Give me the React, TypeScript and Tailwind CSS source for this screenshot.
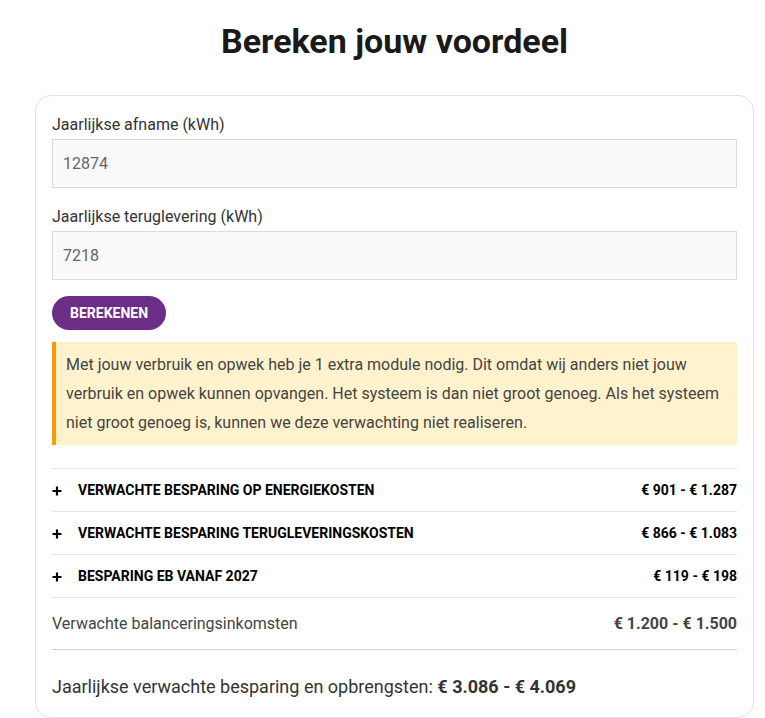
import { useState } from 'react';

const rows = [
  { label: 'VERWACHTE BESPARING OP ENERGIEKOSTEN', value: '€ 901 - € 1.287' },
  { label: 'VERWACHTE BESPARING TERUGLEVERINGSKOSTEN', value: '€ 866 - € 1.083' },
  { label: 'BESPARING EB VANAF 2027', value: '€ 119 - € 198' },
];

function Plus() {
  return (
    <svg width="10" height="10" viewBox="0 0 10 10" className="mt-[2px] shrink-0">
      <path d="M5 0.5v9M0.5 5h9" stroke="#000" strokeWidth="2.2" />
    </svg>
  );
}

export default function App() {
  const [afname, setAfname] = useState('12874');
  const [teruglevering, setTeruglevering] = useState('7218');

  return (
    <div className="h-screen overflow-hidden bg-white pt-[20px] pr-[11px] pl-[35px] font-['Roboto',sans-serif] text-[#333]">
      <h1 className="text-center text-[34px] font-bold leading-[42px] text-[#1a1a1a]">Bereken jouw voordeel</h1>

      <div className="mt-[33px] rounded-2xl border border-[#e2e2e2] px-4 pt-[15px] pb-[17px]">
        {/* Inputs */}
        <label className="block text-base leading-[28px] text-[#333]">Jaarlijkse afname (kWh)</label>
        <input
          value={afname}
          onChange={(e) => setAfname(e.target.value)}
          className="block h-[49px] w-full border border-[#dcdcdc] bg-[#f9f9f9] px-[10px] text-base text-[#666] outline-none"
        />

        <label className="mt-[15px] block text-base leading-[28px] text-[#333]">Jaarlijkse teruglevering (kWh)</label>
        <input
          value={teruglevering}
          onChange={(e) => setTeruglevering(e.target.value)}
          className="block h-[49px] w-full border border-[#dcdcdc] bg-[#f9f9f9] px-[10px] text-base text-[#666] outline-none"
        />

        <button className="mt-[16px] h-[34px] rounded-full bg-[#6b2d85] px-[18px] text-[14px] font-bold text-white">
          BEREKENEN
        </button>

        {/* Melding */}
        <div className="mt-[12px] border-l-4 border-[#ff9900] bg-[#fff2cc] py-[8px] pr-[12px] pl-[10px] text-base leading-[29px] text-[#444]">
          Met jouw verbruik en opwek heb je 1 extra module nodig. Dit omdat wij anders niet jouw verbruik en opwek kunnen
          opvangen. Het systeem is dan niet groot genoeg. Als het systeem niet groot genoeg is, kunnen we deze verwachting
          niet realiseren.
        </div>

        {/* Resultaten */}
        <div className="mt-[23px] border-t border-[#e5e5e5]">
          {rows.map((r) => (
            <div key={r.label} className="flex h-[43px] items-center border-b border-[#e5e5e5] text-[14px] font-bold text-black">
              <Plus />
              <span className="ml-[16px] flex-1">{r.label}</span>
              <span>{r.value}</span>
            </div>
          ))}
          <div className="flex h-[52px] items-center border-b border-[#cfcfcf] text-base text-[#444]">
            <span className="flex-1">Verwachte balanceringsinkomsten</span>
            <span className="font-bold">€ 1.200 - € 1.500</span>
          </div>
        </div>

        <p className="mt-[24px] text-lg leading-[26px] text-[#333]">
          Jaarlijkse verwachte besparing en opbrengsten: <span className="font-bold">€ 3.086 - € 4.069</span>
        </p>
      </div>
    </div>
  );
}
